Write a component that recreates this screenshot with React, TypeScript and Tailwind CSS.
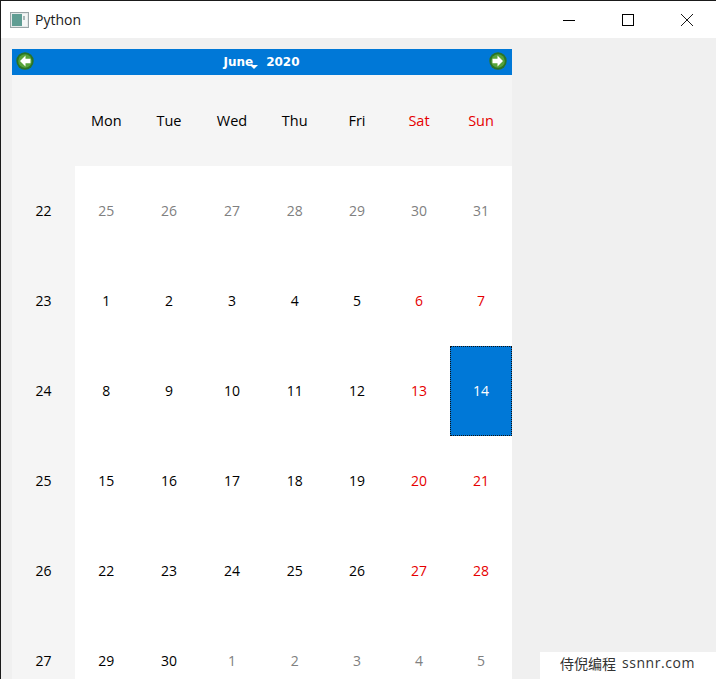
const dayNames = ["Mon", "Tue", "Wed", "Thu", "Fri", "Sat", "Sun"];

const weeks = [
  { week: 22, days: [25, 26, 27, 28, 29, 30, 31], muted: [0, 1, 2, 3, 4, 5, 6] },
  { week: 23, days: [1, 2, 3, 4, 5, 6, 7], muted: [] },
  { week: 24, days: [8, 9, 10, 11, 12, 13, 14], muted: [] },
  { week: 25, days: [15, 16, 17, 18, 19, 20, 21], muted: [] },
  { week: 26, days: [22, 23, 24, 25, 26, 27, 28], muted: [] },
  { week: 27, days: [29, 30, 1, 2, 3, 4, 5], muted: [2, 3, 4, 5, 6] },
];

const NavArrow = ({ dir }: { dir: "left" | "right" }) => (
  <svg width="18" height="18" viewBox="0 0 18 18" className="-mt-[2px]">
    <circle cx="9" cy="9" r="8.7" fill="#2a7426" />
    <circle cx="9" cy="9" r="6.8" fill="#57a33a" />
    <path
      d={dir === "left" ? "M9.5 3.5 L4 9 L9.5 14.5 V11.2 H14.5 V6.8 H9.5 Z" : "M8.5 3.5 L14 9 L8.5 14.5 V11.2 H3.5 V6.8 H8.5 Z"}
      fill="#ffffff"
    />
  </svg>
);

const AppIcon = () => (
  <svg width="19" height="16" viewBox="0 0 19 16">
    <rect x="0.5" y="0.5" width="18" height="15" fill="#e4e9e9" stroke="#9aa5a7" />
    <rect x="2" y="2" width="10" height="12" fill="#5f9d93" />
    <rect x="12" y="2" width="5" height="12" fill="#f4f6f6" />
    <rect x="13" y="4" width="2" height="4" fill="#a9b8b8" />
  </svg>
);

const WindowButtons = () => (
  <div className="ml-auto flex items-center">
    <div className="flex w-[59px] justify-center">
      <svg width="12" height="12" viewBox="0 0 12 12">
        <path d="M0 6.5 H12" stroke="#000000" fill="none" />
      </svg>
    </div>
    <div className="flex w-[59px] justify-center">
      <svg width="12" height="12" viewBox="0 0 12 12">
        <rect x="0.5" y="0.5" width="11" height="11" stroke="#000000" fill="none" />
      </svg>
    </div>
    <div className="flex w-[59px] justify-center">
      <svg width="12" height="12" viewBox="0 0 12 12">
        <path d="M0 0 L12 12 M12 0 L0 12" stroke="#000000" strokeWidth="0.9" fill="none" />
      </svg>
    </div>
  </div>
);

const App = () => {
  return (
    <div className="relative h-[679px] w-[716px] overflow-hidden border-t border-l border-t-[#1a1a1a] border-l-[#1a1a1a] bg-[#f0f0f0] font-['Open_Sans','Noto_Sans',sans-serif] text-[14px] text-black">
      <div className="flex h-[37px] items-center bg-white pl-[9px]">
        <AppIcon />
        <span className="ml-[6px] text-[14px] text-[#1a1a1a]">Python</span>
        <WindowButtons />
      </div>

      <div className="mt-[11px] ml-[11px] w-[500px]">
        <div className="flex h-[26px] items-center justify-between bg-[#0078d7] pr-[5px] pl-[4px]">
          <NavArrow dir="left" />
          <div className="relative flex font-['DejaVu_Sans',sans-serif] text-[12px] font-bold text-white">
            <span>June</span>
            <span className="ml-[13px]">2020</span>
            <span className="absolute top-[12px] left-[27px] h-0 w-0 border-x-[4px] border-t-[4px] border-x-transparent border-t-white" />
          </div>
          <NavArrow dir="right" />
        </div>

        <div className="grid grid-cols-[63px_62.5px_63px_63px_62.5px_62px_62px_62px] grid-rows-[91px_repeat(6,90px)]">
          <div className="bg-[#f5f5f5]" />
          {dayNames.map((name, i) => (
            <div key={name} className={`flex items-center justify-center bg-[#f5f5f5] text-[14.5px] ${i > 4 ? "text-[#e60000]" : "text-black"}`}>
              {name}
            </div>
          ))}
          {weeks.map((row) => (
            <div key={row.week} className="contents">
              <div className="flex items-center justify-center bg-[#f5f5f5] pb-[2px]">{row.week}</div>
              {row.days.map((day, i) => {
                const isMuted = row.muted.includes(i);
                const selected = row.week === 24 && day === 14;
                let color = i > 4 ? "text-[#e60000]" : "text-black";
                if (isMuted) color = "text-[#808080]";
                return (
                  <div
                    key={i}
                    className={
                      selected
                        ? "flex items-center justify-center border border-dotted border-[#111111] bg-[#0078d7] pb-[2px] text-white"
                        : `flex items-center justify-center bg-white pb-[2px] ${color}`
                    }
                  >
                    {day}
                  </div>
                );
              })}
            </div>
          ))}
        </div>
      </div>

      <div className="absolute top-[651px] left-[539px] flex h-[27px] w-[176px] items-center bg-white pb-[6px] pl-[20px] text-[#333333]">
        <span className="font-['Noto_Sans_CJK_SC',sans-serif] text-[14px] leading-[20px]">侍倪编程</span>
        <span className="ml-[6px] text-[14px] leading-[20px] tracking-[0.55px]">ssnnr.com</span>
      </div>
    </div>
  );
};

export default App;
